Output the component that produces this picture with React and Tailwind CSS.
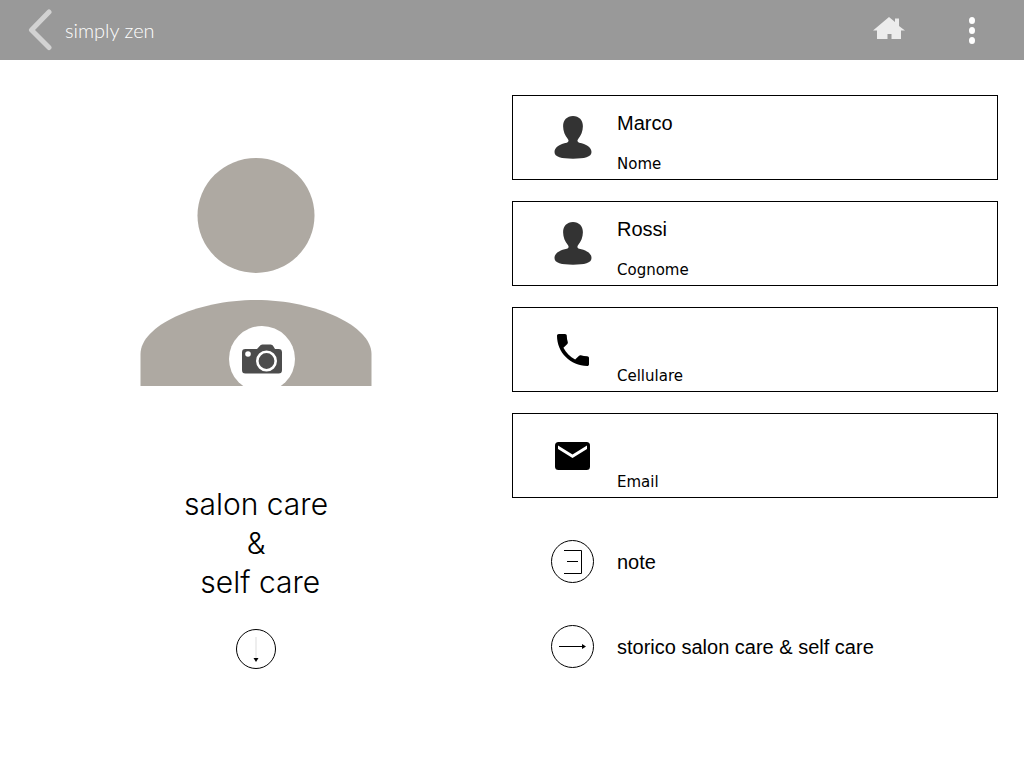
const FIELDS = [
  { id: "nome", label: "Nome", value: "Marco", type: "text", icon: PersonIcon },
  { id: "cognome", label: "Cognome", value: "Rossi", type: "text", icon: PersonIcon },
  { id: "cellulare", label: "Cellulare", value: "", type: "tel", icon: PhoneIcon },
  { id: "email", label: "Email", value: "", type: "email", icon: MailIcon },
];

const LINKS = [
  { label: "note", icon: NoteIcon },
  { label: "storico salon care & self care", icon: ArrowRightIcon },
];

function PersonIcon() {
  return (
    <svg viewBox="0 0 38 44" className="h-11 w-[38px] fill-[#333333]" aria-hidden="true">
      <path d="M19 0c6 0 9.900 4.200 9.900 10.300 0 5-2 9.300-4.400 12.200-1.800 2-1.200 3.500.7 4.200C32 28 37.500 31 37.500 36c0 5-7 6.700-18.500 6.700S.5 41 .5 36c0-5 5.500-8 12.300-9.300 1.900-.7 2.500-2.200.7-4.200-2.400-2.900-4.400-7.200-4.400-12.200C9.100 4.200 13 0 19 0z" />
    </svg>
  );
}

function PhoneIcon() {
  return (
    <svg viewBox="3 3 18 18" className="size-8 fill-black" aria-hidden="true">
      <path d="M6.620 10.790c1.440 2.830 3.760 5.140 6.590 6.590l2.200-2.200c.27-.27.670-.36 1.020-.24 1.120.37 2.330.57 3.570.57.550 0 1 .45 1 1V20c0 .55-.45 1-1 1-9.390 0-17-7.610-17-17 0-.55.450-1 1-1h3.500c.55 0 1 .45 1 1 0 1.250.2 2.450.57 3.570.11.350.03.740-.25 1.020l-2.200 2.200z" />
    </svg>
  );
}

function MailIcon() {
  return (
    <svg viewBox="0 0 35 28" className="h-7 w-[35px]" aria-hidden="true">
      <rect width="35" height="28" rx="3.500" />
      <path d="M3 3.500 17.500 12.500 32 3.500V7L17.500 16 3 7z" fill="white" />
    </svg>
  );
}

function NoteIcon() {
  return (
    <svg viewBox="0 0 43 43" className="size-[43px]" fill="none" stroke="black" aria-hidden="true">
      <circle cx="21.500" cy="21.500" r="21" />
      <path d="M13 10.500h17.500v23H13M16 21.500h11" />
    </svg>
  );
}

function ArrowRightIcon() {
  return (
    <svg viewBox="0 0 43 43" className="size-[43px]" fill="none" stroke="black" aria-hidden="true">
      <circle cx="21.500" cy="21.500" r="21" />
      <path d="M8 21.500h24" />
      <path d="m31 19 4 2.500-4 2.500z" fill="black" stroke="none" />
    </svg>
  );
}

function ArrowDownIcon() {
  return (
    <svg viewBox="0 0 40 40" className="size-10" fill="none" stroke="black" aria-hidden="true">
      <circle cx="20" cy="20" r="19.500" />
      <path d="M20 8v22" stroke="#dddddd" />
      <path d="M17.500 29h5L20 33z" fill="black" stroke="none" />
    </svg>
  );
}

function CameraIcon() {
  return (
    <svg viewBox="0 0 40 30" className="h-[30px] w-10 fill-[#4c4c4c]" aria-hidden="true">
      <path d="M3.500 5H15l3-3.300C19 .7 20 .5 21.500.5h6c1.500 0 2.500.2 3.500 1.200L33 5h3.500C39 5 40 6 40 8.500V26c0 2.500-1 3.500-3.500 3.500h-33C1 29.500 0 28.500 0 26V8.500C0 6 1 5 3.500 5z" />
      <circle cx="6" cy="10" r="2.800" fill="white" />
      <circle cx="24.500" cy="17" r="9.200" fill="none" stroke="white" strokeWidth="2.600" />
    </svg>
  );
}

const Header = () => (
  <header className="flex h-15 items-center justify-between bg-[#999999] pr-10 pl-7">
    <button type="button" className="flex items-center gap-[13px] text-white">
      <svg viewBox="0 0 24 42" className="h-[42px] w-6" fill="none" stroke="#d2d2d2" strokeWidth="5" strokeLinecap="round" strokeLinejoin="round" aria-hidden="true">
        <path d="M21 3 3.500 21 21 38.500" />
      </svg>
      <span className="font-['Lato',sans-serif] text-xl leading-6 font-light">simply zen</span>
    </button>

    <div className="flex items-center gap-[55px]">
      <button type="button" aria-label="Home">
        <svg viewBox="0 0 32 30" className="h-[30px] w-8 fill-[#ececec]" aria-hidden="true">
          <path d="M16 2 22 7V3.500h4V11l6 4.500h-4V24h-9.500v-5h-4v5H4v-8.500H0z" />
        </svg>
      </button>
      <button type="button" aria-label="Menu" className="flex w-6 justify-center">
        <svg viewBox="0 0 6 28" className="h-7 w-1.5 fill-white" aria-hidden="true">
          <ellipse cx="3" cy="4.500" rx="3" ry="3.500" />
          <ellipse cx="3" cy="14.500" rx="3" ry="3.500" />
          <ellipse cx="3" cy="24.500" rx="3" ry="3.500" />
        </svg>
      </button>
    </div>
  </header>
);

const Profile = () => (
  <section className="flex flex-col items-center pt-[98px]">
    <div className="relative">
      <svg viewBox="0 0 232 228" className="h-[228px] w-[232px] fill-[#aea9a2]" role="img" aria-label="Foto profilo">
        <ellipse cx="116" cy="57.500" rx="58.500" ry="57.500" />
        <path d="M.5 228v-32C.5 168 56 142 116 142s115.500 26 115.500 54v32z" />
      </svg>
      <button
        type="button"
        aria-label="Cambia foto"
        className="absolute -bottom-1.5 left-[89px] flex size-[66px] items-center justify-center rounded-full bg-white"
      >
        <CameraIcon />
      </button>
    </div>

    <h1 className="mt-[99px] text-center font-['Inter',sans-serif] text-[30px] leading-[39px] font-light">
      salon care
      <br />
      &amp;
      <br />
      &nbsp;self care
    </h1>
    <button type="button" aria-label="Mostra altro" className="mt-[27px]">
      <ArrowDownIcon />
    </button>
  </section>
);

const Field = ({ field }) => (
  <div className="flex h-[85px] items-center gap-[23px] border border-black pr-4 pl-[38px]">
    <div className="flex w-[43px] shrink-0 justify-center">
      <field.icon />
    </div>
    <div className="flex min-w-0 flex-1 flex-col-reverse gap-[19px] pt-2.5">
      <label htmlFor={field.id} className="font-['DejaVu_Sans',sans-serif] text-[15px] leading-5">
        {field.label}
      </label>
      <input
        id={field.id}
        type={field.type}
        defaultValue={field.value}
        className="h-6 w-full bg-transparent text-xl leading-6 outline-none"
      />
    </div>
  </div>
);

const App = () => {
  return (
    <div className="min-h-screen bg-white font-['Liberation_Sans',Arial,sans-serif] text-black">
      <Header />

      <main className="grid grid-cols-2">
        <Profile />

        <section className="pt-[35px] pr-[26px]">
          <form className="flex flex-col gap-[21px]">
            {FIELDS.map((field) => (
              <Field key={field.id} field={field} />
            ))}
          </form>

          <nav className="mt-[42px] flex flex-col gap-[42px] pl-[39px]">
            {LINKS.map((link) => (
              <a key={link.label} href="#" className="flex items-center gap-[23px] text-xl leading-6">
                <link.icon />
                {link.label}
              </a>
            ))}
          </nav>
        </section>
      </main>
    </div>
  );
};

export default App;
